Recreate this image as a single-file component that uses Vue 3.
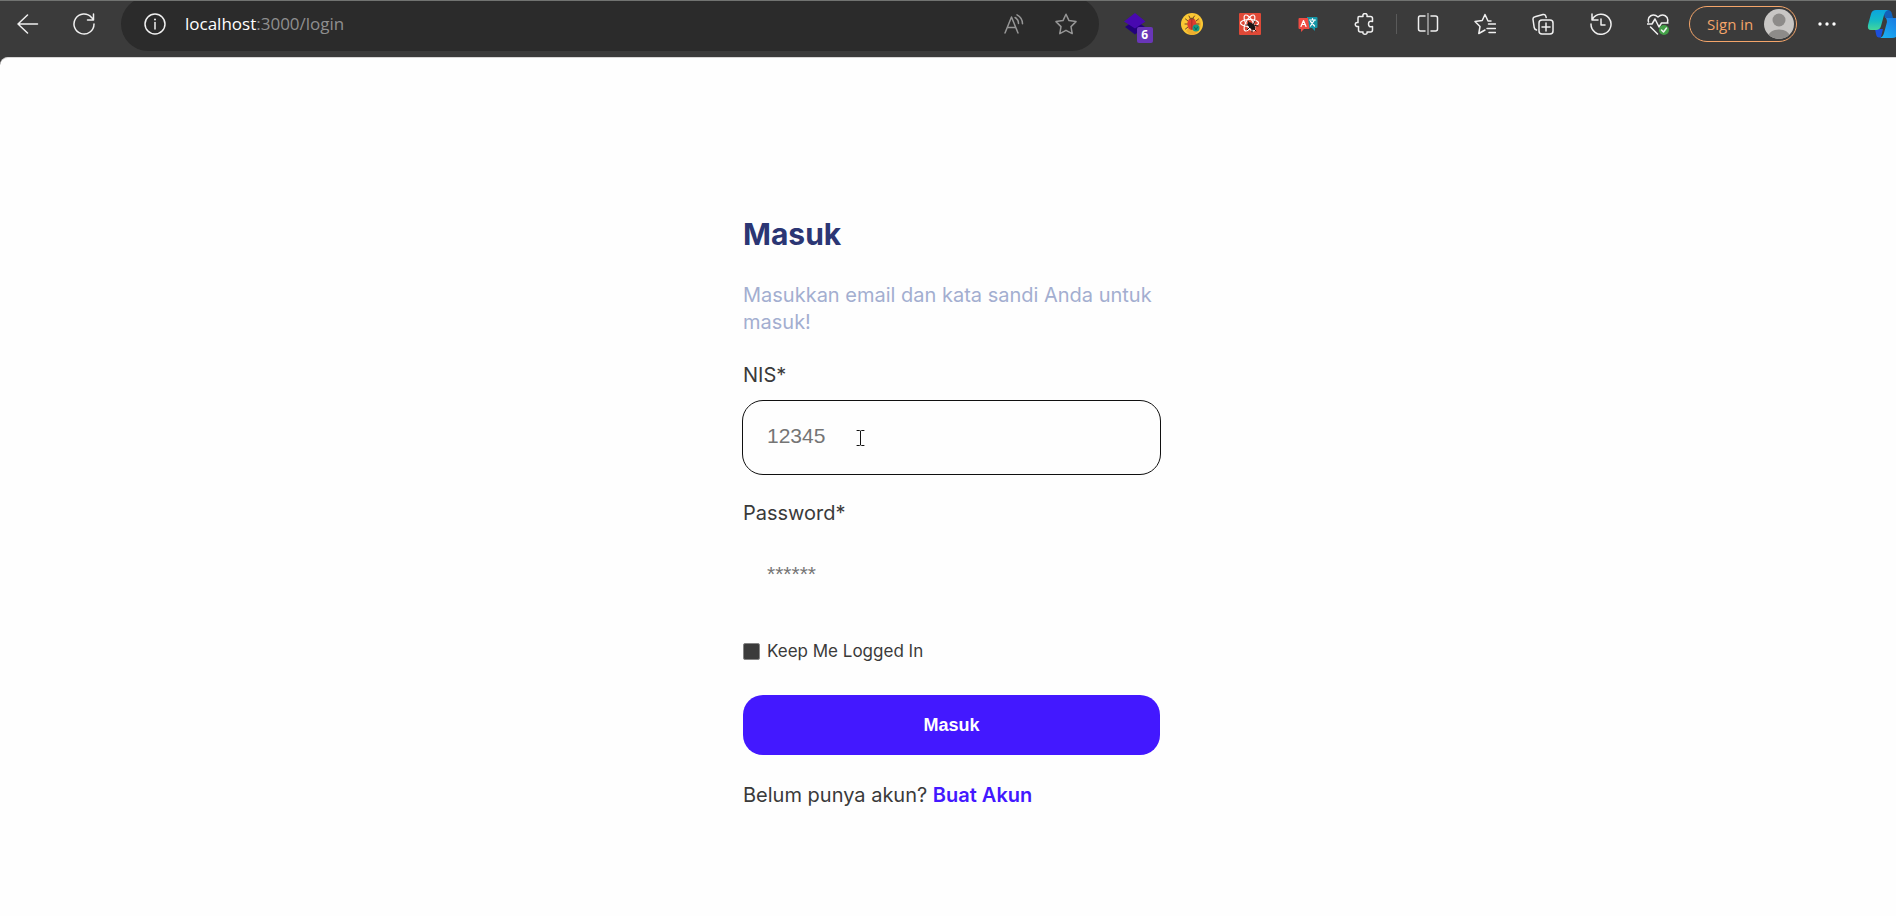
<script setup>
import { ref } from 'vue'

const nis = ref('')
const password = ref('')
const keep = ref(false)
const address = ref('localhost:3000/login')
</script>

<template>
  <div class="browser">
    <header class="toolbar">
      <button class="tool" aria-label="Back">
        <svg width="22" height="22" viewBox="0 0 22 22"><path d="M20.500 11H1M10.500 2L1 11l9.500 9" /></svg>
      </button>
      <button class="tool" aria-label="Refresh">
        <svg width="22" height="22" viewBox="0 0 22 22"><path d="M21 11a10 10 0 1 1-2.500-6.600L20 6M20.500 1v6h-6" /></svg>
      </button>

      <div class="address">
        <button class="mini" aria-label="View site information">
          <svg width="22" height="22" viewBox="0 0 22 22"><circle cx="11" cy="11" r="10" /><path d="M11 9.500v6.500" /><circle cx="11" cy="6.500" r="1" class="solid" /></svg>
        </button>
        <a class="url" :href="'http://' + address"><span class="host">localhost</span>:3000/login</a>
        <button class="mini dim" aria-label="Read aloud">
          <svg width="20" height="20" viewBox="0 0 20 20"><path d="M1 19L7.500 3L14 19M3.300 13.500h8.500M11 3.500c2.500 1.300 3.500 3.500 3.500 6M13 .8c3.500 1.800 5.500 5 5.500 9" /></svg>
        </button>
        <button class="mini dim" aria-label="Add to favorites">
          <svg width="22" height="22" viewBox="0 0 22 22"><path d="M11 1.200l3 6.400 7 1-5 5 1.200 7-6.200-3.300-6.200 3.300 1.200-7-5-5 7-1z" /></svg>
        </button>
      </div>

      <div class="group">
        <button class="tool" aria-label="Layers extension, 6">
          <span class="layers">
            <svg width="22" height="22" viewBox="0 0 22 22"><path class="layer-low" d="M1 14L11 7l10 7-10 7.500z" /><path class="layer-top" d="M0 8.500L11 0l10.500 8.500L11 15.500z" /></svg>
            <span class="badge">6</span>
          </span>
        </button>
        <button class="tool" aria-label="Bug tracker extension">
          <svg class="flat" width="22" height="22" viewBox="0 0 22 22">
            <circle cx="11" cy="11" r="11" fill="#fbc834" />
            <path d="M5 18L18 5a11 11 0 0 1-7 17 11 11 0 0 1-6-4z" fill="#eeae2e" />
            <g stroke="#6b4528" stroke-width="1" fill="none"><path d="M7 8L4.500 6M15 8l2.500-2M6.500 11H4M15 11h3M7 14l-2.500 2M9 5L8 3M12 5l1.500-2" /></g>
            <ellipse cx="10.800" cy="11" rx="4.500" ry="6" fill="#db3c31" />
            <path d="M8 6.500c1-2.500 4.500-2.500 5.500 0z" fill="#784c2c" />
            <path d="M10.800 7v9" stroke="#a82e2a" />
            <circle cx="15" cy="15" r="3.500" fill="#159a82" />
            <path d="M13.500 14l1.500 3 1.500-3" stroke="#0a6457" fill="none" />
          </svg>
        </button>
        <button class="tool" aria-label="React developer tools">
          <svg class="flat" width="22" height="22" viewBox="0 0 22 22">
            <rect width="22" height="22" rx="1" fill="#df4937" />
            <g fill="none" stroke="#fff" stroke-width="1.200"><ellipse cx="10.500" cy="10" rx="9" ry="3.500" /><ellipse cx="10.500" cy="10" rx="9" ry="3.500" transform="rotate(60 10.500 10)" /><ellipse cx="10.500" cy="10" rx="9" ry="3.500" transform="rotate(120 10.500 10)" /></g>
            <ellipse cx="12.500" cy="13" rx="2.500" ry="4.500" transform="rotate(-45 12.500 13)" fill="#191515" />
            <path d="M9 8l2 4M7 12h4M8 17l3-3M13 19v-5M16 8l-2 4M19 13l-5-1M17 18l-3-3" stroke="#191515" fill="none" />
          </svg>
        </button>
        <button class="tool" aria-label="Translate extension">
          <svg class="flat" width="20" height="16" viewBox="0 0 20 16">
            <path d="M9 1h9.500q1 0 1 1v9q0 1-1 1H17v3l-3-3H9z" fill="#1596a7" />
            <path d="M1.500 2H10l1.500 11H6l-3 3v-3H1.500Q.5 13 .5 12V3q0-1 1-1z" fill="#ef4b43" />
            <path d="M3 10.500L5.500 4.500 8 10.500M4 8.500h3M11.500 4h6M14.500 2.500V4M12.500 10l4-6M12.500 5.500l4 4.500" stroke="#fff" fill="none" stroke-width="1.200" />
          </svg>
        </button>
        <button class="tool" aria-label="Extensions">
          <svg width="22" height="22" viewBox="0 0 22 22"><path d="M5 3.500h4c-1-4 5-4 4 0h3.500q2 0 2 2V8.500c-3-1-4 .5-4 2.500s1 3.500 4 2.500V17q0 2-2 2H13c1 3-5 3-4 0H6.500q-2 0-2-2v-3.500C.3 14.500.3 8.500 4 9.500V5q0-1.500 1-1.500z" /></svg>
        </button>
      </div>
      <span class="divider"></span>
      <div class="group">
        <button class="tool" aria-label="Split screen">
          <svg width="22" height="22" viewBox="0 0 22 22"><path d="M8 3H3Q1.500 3 1.500 5v11q0 2 2 2H8M14 3h4.500q2 0 2 2v11q0 2-2 2H14" /><path class="thin" d="M11 .5v21" /></svg>
        </button>
        <button class="tool" aria-label="Favorites">
          <svg width="22" height="22" viewBox="0 0 22 22"><path d="M14 8L11 1.500 8.200 7.500 1 8.500l5 5-1.200 7L11 17M15 8h2M14.500 11h7M13 15.500h8.500M15 19.500h6.500" /></svg>
        </button>
        <button class="tool" aria-label="Collections">
          <svg width="22" height="22" viewBox="0 0 22 22"><path d="M4.500 17C3 16.500 2.500 16 2.200 14.500L1 6.500C.8 5 1.500 4 3 3.700l8-2.200c2-.4 2.700.5 3.200 3" /><rect x="7" y="7" width="14" height="14" rx="3" /><path d="M14 10v8M10 14h8" /></svg>
        </button>
        <button class="tool" aria-label="History">
          <svg width="22" height="22" viewBox="0 0 22 22"><path d="M2.500 6a10 10 0 1 1-1.500 5M2 1v6h6M11 6v6h4" /></svg>
        </button>
        <button class="tool" aria-label="Browser essentials">
          <svg width="22" height="22" viewBox="0 0 22 22"><path d="M1.500 9C0 3.500 6-.5 11 4c5-4.500 11-.5 9.500 5M0 11h5l3-5 4 8 2.500-4H21M3.500 14l7 7" /><circle cx="17" cy="17" r="5" class="ok" /><path d="M14.500 17l2 2 3-4" /></svg>
        </button>
      </div>

      <button class="signin">
        Sign in
        <svg class="flat" width="32" height="32" viewBox="0 0 32 32">
          <defs><clipPath id="face"><circle cx="16" cy="16" r="15" /></clipPath></defs>
          <circle cx="16" cy="16" r="15" fill="#c8c6c4" />
          <g clip-path="url(#face)" fill="#8d8b89"><circle cx="16" cy="12" r="6.500" /><path d="M4 32c0-14 24-14 24 0z" /></g>
        </svg>
      </button>
      <button class="tool" aria-label="Settings and more">
        <svg class="flat" width="18" height="4" viewBox="0 0 18 4"><g fill="#fff"><circle cx="2" cy="2" r="1.700" /><circle cx="9" cy="2" r="1.700" /><circle cx="16" cy="2" r="1.700" /></g></svg>
      </button>
      <button class="copilot" aria-label="Copilot">
        <svg class="flat" width="36" height="30" viewBox="0 0 36 30">
          <defs>
            <linearGradient id="wing" x1="0" y1="0" x2="0" y2="1"><stop offset="0" stop-color="#0ba5df" /><stop offset=".55" stop-color="#16bbc4" /><stop offset="1" stop-color="#45d79a" /></linearGradient>
            <linearGradient id="tail" x1="0" y1="1" x2="1" y2="0"><stop offset="0" stop-color="#1bb7f5" /><stop offset="1" stop-color="#1970de" /></linearGradient>
          </defs>
          <path d="M16 1h5q3 0 4 4l1 4h-8z" fill="#1261ba" />
          <path d="M8 20h8l-2 8q-4 2-5-3z" fill="#1c4fdb" />
          <path d="M19 9h13q4 0 3 4l-4 12q-1 4-6 4H13q3-1 4-5l3-11q0-2-1-4z" fill="url(#tail)" />
          <path d="M9 1h12q-3 1-4 5l-3 11q-1 4-5 4H4q-4 0-3-5L4 5q1-4 5-4z" fill="url(#wing)" />
        </svg>
      </button>
    </header>

    <main class="page">
      <form class="login" @submit.prevent>
        <h1>Masuk</h1>
        <p class="intro">Masukkan email dan kata sandi Anda untuk masuk!</p>

        <label class="label" for="nis">NIS*</label>
        <div class="field">
          <input id="nis" v-model="nis" class="box outlined" type="text" placeholder="12345" />
          <svg class="caret" width="9" height="18" viewBox="0 0 9 18"><path d="M1 1.500h2.500l1 1 1-1H8M4.500 2v14M1 16.500h2.500l1-1 1 1H8" /></svg>
        </div>

        <label class="label" for="password">Password*</label>
        <div class="field">
          <input id="password" v-model="password" class="box" type="password" placeholder="******" />
        </div>

        <div class="keep">
          <input id="keep" v-model="keep" type="checkbox" />
          <label for="keep">Keep Me Logged In</label>
        </div>

        <button class="submit" type="submit">Masuk</button>
        <p class="register">Belum punya akun? <a href="#register">Buat Akun</a></p>
      </form>
    </main>
  </div>
</template>

<style>
body {
  margin: 0;
  background: #3b3b3b;
}
</style>

<style scoped>
* {
  box-sizing: border-box;
}
.browser {
  display: flex;
  flex-direction: column;
  min-height: 100vh;
  overflow: hidden;
  font-family: Inter, "Liberation Sans", sans-serif;
}
button {
  padding: 0;
  border: 0;
  background: none;
  cursor: pointer;
}
svg {
  display: block;
  flex: none;
  fill: none;
  stroke: #f0f0f0;
  stroke-width: 1.5;
  stroke-linecap: round;
  stroke-linejoin: round;
}
svg.flat {
  stroke: none;
  stroke-width: 1;
}
.toolbar {
  position: relative;
  display: flex;
  align-items: center;
  height: 57px;
  padding-bottom: 9px;
  overflow: hidden;
  background: #3b3b3b;
}
.toolbar::before {
  content: "";
  position: absolute;
  inset: 0 0 auto;
  height: 1px;
  background: #717371;
}
.tool {
  display: flex;
  flex: none;
  align-items: center;
  justify-content: center;
  width: 56px;
  height: 40px;
}
.address {
  display: flex;
  flex: 1;
  align-items: center;
  height: 54px;
  margin: 0 7px 0 9px;
  padding: 0 22px 0 23px;
  border-radius: 27px;
  background: #2b2b2b;
}
.mini {
  flex: none;
}
.dim {
  margin-left: 31px;
}
.dim svg {
  stroke: #969696;
}
.url {
  flex: 1;
  margin-left: 19px;
  color: #8f8f8f;
  font: 17px/24px "Open Sans", "Noto Sans", sans-serif;
  text-decoration: none;
}
.host {
  color: #fff;
}
.solid {
  fill: #f0f0f0;
  stroke: none;
}
.group {
  display: grid;
  flex: none;
  grid-template-columns: repeat(5, 1fr);
  width: 288px;
}
.group .tool {
  width: auto;
}
.divider {
  flex: none;
  width: 1px;
  height: 20px;
  margin: 0 2px;
  background: #5a5a5a;
}
.thin {
  stroke: #aaa;
}
.layers {
  position: relative;
}
.layers svg {
  stroke: none;
}
.layer-low {
  fill: #23007c;
}
.layer-top {
  fill: #4808b0;
}
.badge {
  position: absolute;
  top: 14px;
  left: 13px;
  width: 16px;
  height: 16px;
  border-radius: 2px;
  background: #6936b8;
  color: #fff;
  font: bold 12px/16px "Open Sans", sans-serif;
  text-align: center;
}
.ok {
  fill: #43a047;
  stroke: none;
}
.signin {
  display: flex;
  flex: none;
  align-items: center;
  justify-content: space-between;
  width: 108px;
  height: 36px;
  margin: 0 2px;
  padding: 0 1px 0 17px;
  border: 1px solid #f4a56a;
  border-radius: 18px;
  color: #f4a56a;
  font: 15px/24px "Open Sans", "Noto Sans", sans-serif;
}
.copilot {
  flex: none;
  width: 29px;
  margin-left: 12px;
}
.page {
  display: flex;
  flex: 1;
  justify-content: center;
  padding: 156px 0 40px 7px;
  border-top: 1px solid #d8d6d6;
  border-top-left-radius: 8px;
  background: #fefefe;
}
.login {
  width: 100%;
  max-width: 417px;
  color: #3a3a3a;
  font-size: 20px;
  line-height: 27px;
}
h1 {
  margin: 0 0 28px;
  color: #2b3674;
  font-size: 30px;
  line-height: 40px;
}
.intro {
  margin: 0 0 26px;
  color: #a3aed0;
}
.label {
  display: block;
  margin-bottom: 12px;
}
.field {
  position: relative;
  margin-bottom: 26px;
}
.box {
  display: block;
  width: 100%;
  height: 73px;
  padding: 0 24px 3px;
  border: 0;
  border-radius: 20px;
  outline: 0;
  background: transparent;
  color: #3a3a3a;
  font: 21px/24px "Liberation Sans", Arial, sans-serif;
}
.outlined {
  outline: 1px solid #101010;
}
.box::placeholder {
  color: #757575;
}
.caret {
  position: absolute;
  top: 28px;
  left: 113px;
  stroke: #111;
  stroke-width: 1;
}
.keep {
  display: flex;
  align-items: center;
  gap: 7px;
  margin-bottom: 30px;
  font-size: 17px;
}
.keep input {
  width: 17px;
  height: 17px;
  margin: 0;
  appearance: none;
  border: 1px solid #858585;
  border-radius: 2px;
  background: #3b3b3b;
}
.submit {
  display: block;
  width: 100%;
  height: 60px;
  margin-bottom: 27px;
  border-radius: 20px;
  background: #4318ff;
  color: #fff;
  font: bold 18px/24px "Liberation Sans", Arial, sans-serif;
}
.register {
  margin: 0;
}
.register a {
  color: #4318ff;
  font-weight: 600;
  text-decoration: none;
}
</style>
